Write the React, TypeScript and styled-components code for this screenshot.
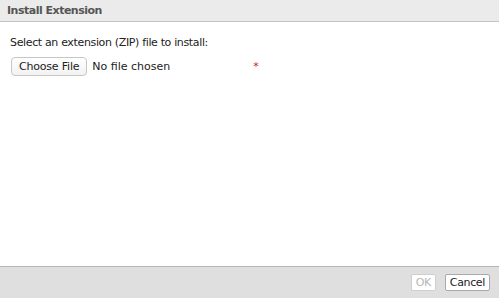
import React from "react";
import styled, { createGlobalStyle } from "styled-components";

const Global = createGlobalStyle`
  html, body { margin: 0; padding: 0; background: #fff; }
  body { font-family: "DejaVu Sans", Verdana, sans-serif; }
  * { box-sizing: border-box; }
`;

const Dialog = styled.div`
  width: 499px;
  height: 298px;
  display: flex;
  flex-direction: column;
  background: #fff;
`;

const Header = styled.div`
  height: 22px;
  background: #ebebeb;
  border-bottom: 1px solid #c4c4c4;
  display: flex;
  align-items: center;
  padding: 0 7px;
  font-size: 11px;
  font-weight: bold;
  letter-spacing: -0.5px;
  color: #555;
`;

const Body = styled.div`
  flex: 1;
  padding: 14px 10px 0;
  font-size: 11px;
  letter-spacing: -0.35px;
  color: #222;
`;

const Label = styled.div`
  line-height: 14px;
`;

const FileRow = styled.div`
  display: flex;
  align-items: center;
  margin-top: 7px;
  margin-left: 1px;
`;

const FileButton = styled.button`
  font-family: "DejaVu Sans", Verdana, sans-serif;
  font-size: 11px;
  letter-spacing: -0.2px;
  color: #222;
  height: 19px;
  padding: 0 7px;
  background: linear-gradient(#fff, #f2f2f2);
  border: 1px solid #c6c6c6;
  border-radius: 4px;
`;

const FileStatus = styled.span`
  margin-left: 5px;
  width: 161px;
  letter-spacing: 0;
`;

const Required = styled.span`
  color: #d0143a;
  font-size: 11px;
`;

const Footer = styled.div`
  height: 32px;
  background: #dfdfdf;
  border-top: 1px solid #b5b5b5;
  display: flex;
  justify-content: flex-end;
  align-items: center;
  gap: 9px;
  padding: 0 9px 0 0;
`;

const Button = styled.button<{ disabled?: boolean }>`
  font-family: "DejaVu Sans", Verdana, sans-serif;
  font-size: 11px;
  letter-spacing: -0.35px;
  height: 17px;
  padding: 0 4px;
  background: #fff;
  border: 1px solid ${(p) => (p.disabled ? "#cfcfcf" : "#a9a9a9")};
  color: ${(p) => (p.disabled ? "#b5b5b5" : "#222")};
  border-radius: 2px;
`;

export default function App() {
  return (
    <>
      <Global />
      <Dialog>
        <Header>Install Extension</Header>
        <Body>
          <Label>Select an extension (ZIP) file to install:</Label>
          <FileRow>
            <FileButton>Choose File</FileButton>
            <FileStatus>No file chosen</FileStatus>
            <Required>*</Required>
          </FileRow>
        </Body>
        <Footer>
          <Button disabled>OK</Button>
          <Button>Cancel</Button>
        </Footer>
      </Dialog>
    </>
  );
}
